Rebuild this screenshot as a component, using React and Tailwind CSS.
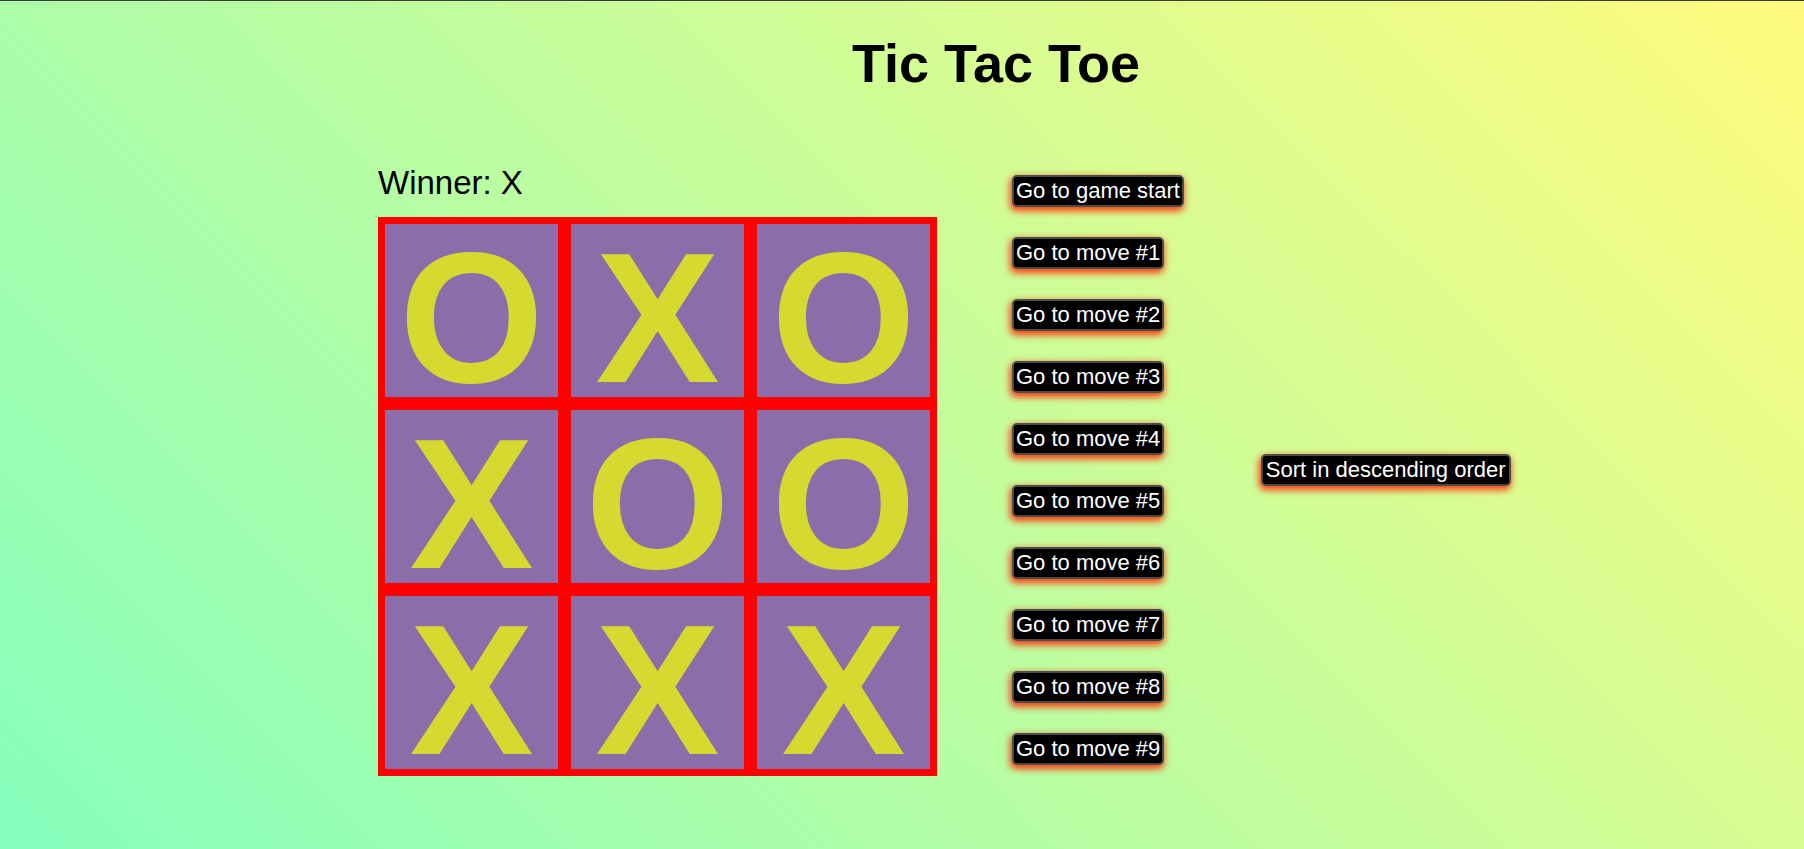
import React from "react";

const cells = ["O", "X", "O", "X", "O", "O", "X", "X", "X"];
const moves = [
  "Go to game start",
  "Go to move #1",
  "Go to move #2",
  "Go to move #3",
  "Go to move #4",
  "Go to move #5",
  "Go to move #6",
  "Go to move #7",
  "Go to move #8",
  "Go to move #9",
];

const btn =
  "rounded-[5px] border-2 border-[#4b4b4b] bg-black px-[2px] py-px text-[22px] leading-[26px] text-white whitespace-nowrap shadow-[-1px_3px_7px_1px_rgba(255,48,10,0.95)]";

export default function App() {
  return (
    <div className="min-h-screen w-full border-t border-[#3b3b3b] bg-[#85FFBD] bg-[linear-gradient(45deg,#85FFBD_0%,#FFFB7D_100%)] font-['Liberation_Sans',Arial,sans-serif] text-black">
      <h1 className="pt-[32px] pl-[188px] text-center text-[54px] font-bold leading-[60px]">
        Tic Tac Toe
      </h1>
      <div className="mt-[71px] flex items-center pl-[378px]">
        <div className="flex flex-col">
          <div className="text-[33px] leading-[38px]">Winner: X</div>
          <div className="mt-[15px] grid w-[559px] grid-cols-3 gap-[13px] bg-[#ff0000] p-[7px]">
            {cells.map((c, i) => (
              <div
                key={i}
                className="h-[173px] w-[173px] bg-[#8b6daa] pt-[14px] text-center text-[186px] font-bold leading-[159px] text-[#d6d92f]"
              >
                {c}
              </div>
            ))}
          </div>
        </div>
        <ol className="ml-[75px] flex flex-col items-start gap-[30px]">
          {moves.map((m) => (
            <li key={m}>
              <button className={btn}>{m}</button>
            </li>
          ))}
        </ol>
        <div className="ml-[77px]">
          <button className={btn + " px-[3px]"}>Sort in descending order</button>
        </div>
      </div>
    </div>
  );
}
